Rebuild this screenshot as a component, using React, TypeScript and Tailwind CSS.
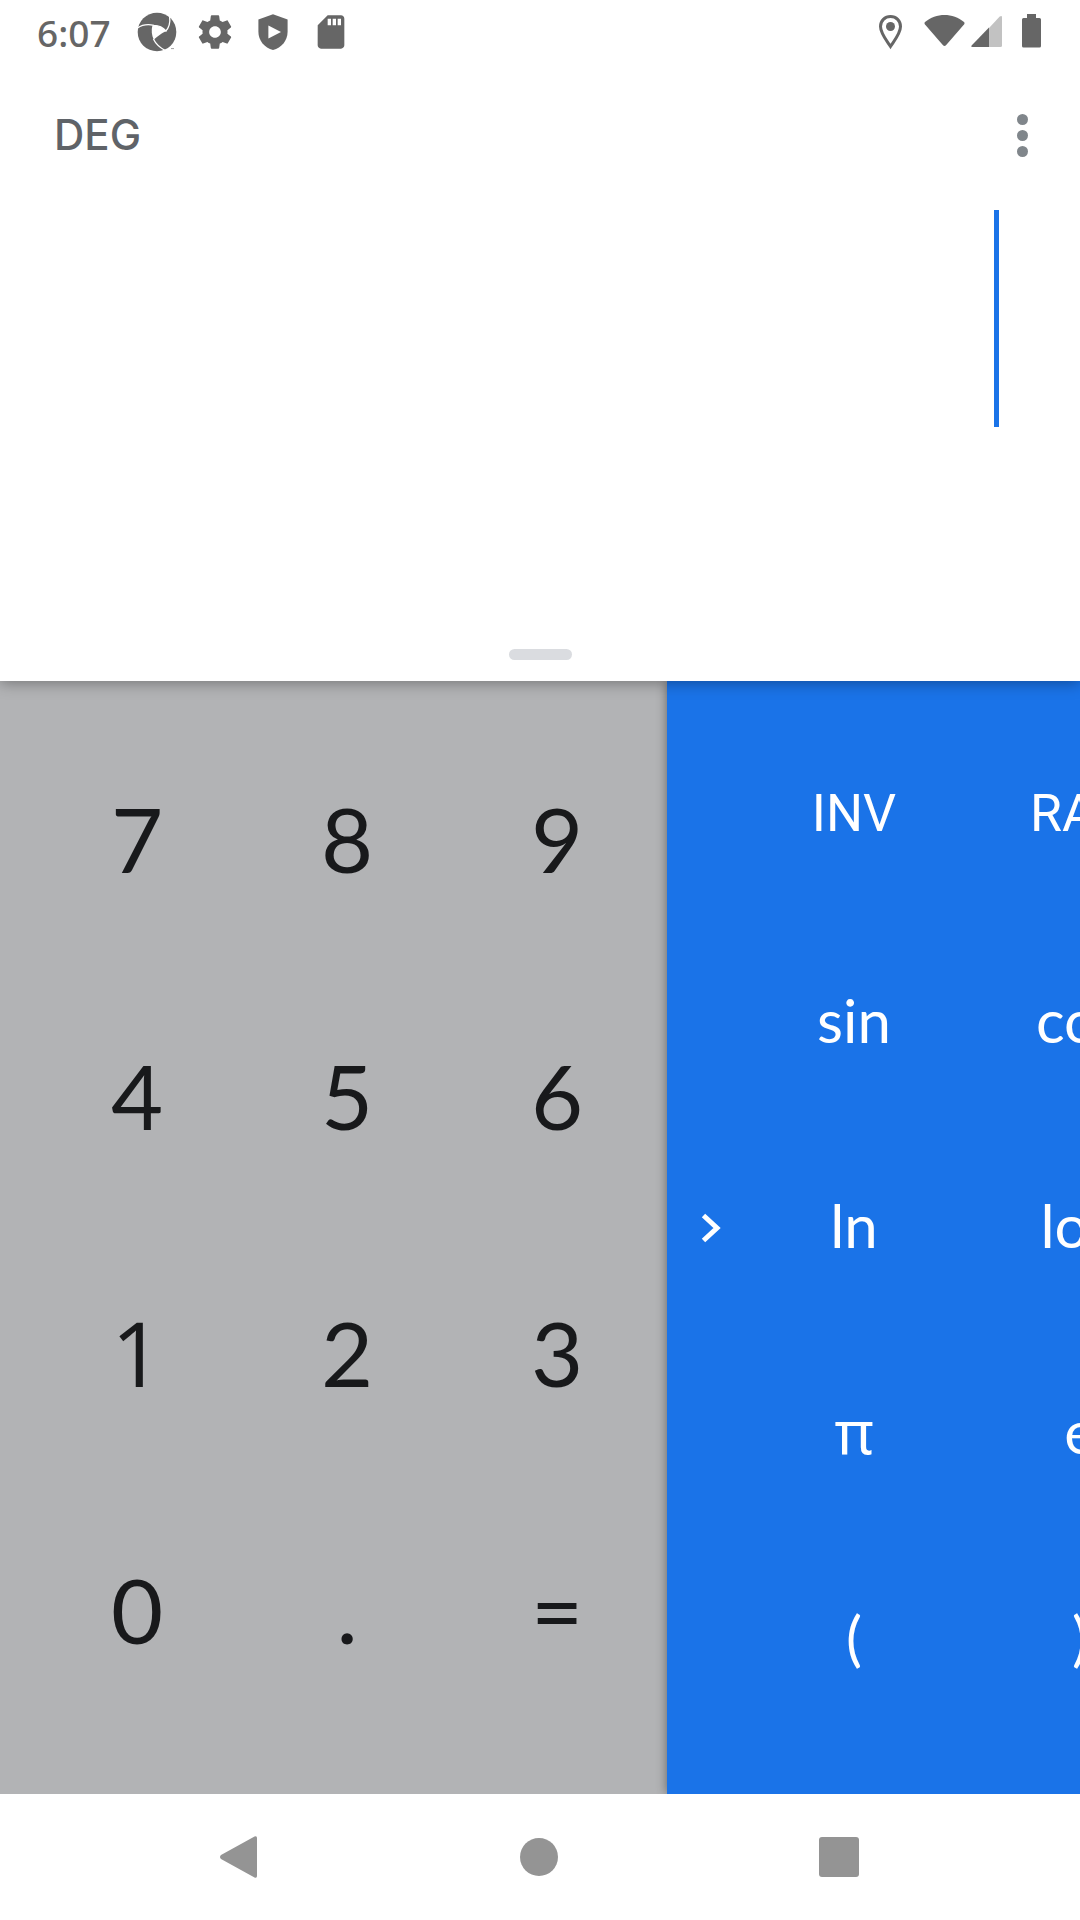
const lato = "font-['Lato',sans-serif]";
const openSans = "font-['Open_Sans',sans-serif]";

const digitKeys = ["7", "8", "9", "4", "5", "6", "1", "2", "3", "0", ".", "="];

const advancedKeys: { label: string; style: string }[] = [
  { label: "INV", style: "font-['Roboto',sans-serif] text-[52px]" },
  { label: "RAD", style: "font-['Roboto',sans-serif] text-[52px]" },
  { label: "sin", style: "font-['Lato',sans-serif] text-[60px]" },
  { label: "cos", style: "font-['Lato',sans-serif] text-[60px]" },
  { label: "ln", style: "font-['Lato',sans-serif] text-[60px]" },
  { label: "log", style: "font-['Lato',sans-serif] text-[60px]" },
  { label: "π", style: "font-['Noto_Sans',sans-serif] text-[60px]" },
  { label: "e", style: "font-['Lato',sans-serif] text-[60px]" },
  { label: "(", style: "font-['Lato',sans-serif] text-[60px]" },
  { label: ")", style: "font-['Lato',sans-serif] text-[60px]" },
];

function ApertureIcon() {
  return (
    <svg viewBox="0 0 40 40" className="size-10" aria-hidden="true">
      <circle cx="20" cy="20" r="19.3" fill="#666" />
      <path d="M15.4 13.6C20 13.2 25.5 15 29.2 19C26 20.5 20 24.5 16.8 27.8C14.6 23.5 14.2 18 15.4 13.6Z" fill="#fff" />
      <g fill="none" stroke="#fff" strokeWidth="1.3">
        <path d="M0.5 16C5 12.9 11 12 17 13.4C21 13.4 26 15.4 29.4 19.4" />
        <path d="M32.6 4.6C33.4 10 32 15.5 28.6 19.4" />
        <path d="M16.4 27C18.6 31.5 22.5 35.4 28 38.4" />
      </g>
      <path d="M27.5 38.5C30.5 37.6 33.5 36 35.4 34L40 34V40H25Z" fill="#fff" />
      <path d="M34 36.6h3" stroke="#888" strokeWidth="0.8" />
    </svg>
  );
}

function GearIcon() {
  return (
    <svg viewBox="0 0 24 24" className="size-10" fill="#666" aria-hidden="true">
      <path d="M19.43 12.98c.04-.32.07-.64.07-.98s-.03-.66-.07-.98l2.11-1.65c.19-.15.24-.42.12-.64l-2-3.46c-.12-.22-.39-.3-.61-.22l-2.49 1c-.52-.4-1.08-.73-1.69-.98l-.38-2.65C14.46 2.18 14.25 2 14 2h-4c-.25 0-.46.18-.49.42l-.38 2.65c-.61.25-1.17.59-1.69.98l-2.49-1c-.23-.09-.49 0-.61.22l-2 3.46c-.13.22-.07.49.12.64l2.11 1.65c-.04.32-.07.65-.07.98s.03.66.07.98l-2.11 1.65c-.19.15-.24.42-.12.64l2 3.46c.12.22.39.3.61.22l2.49-1c.52.4 1.08.73 1.69.98l.38 2.65c.03.24.24.42.49.42h4c.25 0 .46-.18.49-.42l.38-2.65c.61-.25 1.17-.59 1.69-.98l2.49 1c.23.09.49 0 .61-.22l2-3.46c.12-.22.07-.49-.12-.64l-2.11-1.65zM12 15.5c-1.93 0-3.5-1.57-3.5-3.5s1.57-3.5 3.5-3.5 3.5 1.57 3.5 3.5-1.57 3.5-3.5 3.5z" />
    </svg>
  );
}

function ShieldPlayIcon() {
  return (
    <svg viewBox="0 0 40 40" className="size-10" aria-hidden="true">
      <path d="M20 2.2L34.6 7.6V19.5C34.6 29 28.5 35.5 20 38C11.5 35.5 5.4 29 5.4 19.5V7.6Z" fill="#666" />
      <path d="M15.4 13.4V26.6L28 20Z" fill="#fff" />
    </svg>
  );
}

function SdCardIcon() {
  return (
    <svg viewBox="0 0 24 24" className="size-10" fill="#666" aria-hidden="true">
      <path d="M18 2h-8L4.02 8 4 20c0 1.1.9 2 2 2h12c1.1 0 2-.9 2-2V4c0-1.1-.9-2-2-2zm-6 6h-2V4h2v4zm3 0h-2V4h2v4zm3 0h-2V4h2v4z" />
    </svg>
  );
}

function StatusBar() {
  return (
    <div className="flex h-16 items-center pr-[38px] pl-[37px]">
      <span className="font-['Noto_Sans',sans-serif] text-[37px] leading-none font-medium text-[#666]">6:07</span>
      <div className="ml-[26px] flex gap-[18px]">
        <ApertureIcon />
        <GearIcon />
        <ShieldPlayIcon />
        <SdCardIcon />
      </div>
      <div className="ml-auto flex items-center">
        <svg viewBox="0 0 24 36" className="mr-[21px] h-9 w-6" aria-hidden="true">
          <path d="M11.500 2.500C5.800 2.500 1.500 6.800 1.500 12.500C1.500 19.500 8 27 11.500 32.500C15 27 21.500 19.500 21.500 12.500C21.500 6.800 17.200 2.500 11.500 2.500Z" fill="none" stroke="#666" strokeWidth="3" />
          <circle cx="11.5" cy="12.5" r="4.5" fill="#666" />
        </svg>
        <svg viewBox="0 0 41 36" className="mr-[6px] h-9 w-[41px]" aria-hidden="true">
          <path d="M1 8C12 -1.500 29 -1.500 40 8Q41 9 40 10.500L22 31.300Q20.500 32.800 19 31.300L1 10.500Q0 9 1 8Z" fill="#666" />
        </svg>
        <svg viewBox="0 0 32 36" className="mr-[19px] h-9 w-8" aria-hidden="true">
          <path d="M18 14L28.500 2.800Q31 1 31 3.500V31.500Q31 33 29.500 33H18Z" fill="#c2c2c2" />
          <path d="M18 13.500V33H1.500Q-0.500 33 0.600 31.400Z" fill="#666" />
        </svg>
        <svg viewBox="0 0 20 36" className="h-9 w-5" aria-hidden="true">
          <path d="M5 0H14V4H17.500Q19 4 19 5.500V32Q19 33.500 17.500 33.500H1.500Q0 33.500 0 32V5.500Q0 4 1.500 4H5Z" fill="#666" />
        </svg>
      </div>
    </div>
  );
}

function Display() {
  return (
    <header className="relative z-10 bg-white shadow-[0_2px_14px_rgba(0,0,0,0.35)]">
      <StatusBar />
      <div className="flex h-[146px] items-center justify-between pr-[38px] pb-1 pl-[54px]">
        <span className="font-['Inter',sans-serif] text-[42px] leading-none font-medium text-[#5f6368]">DEG</span>
        <button type="button" aria-label="More options" className="flex w-10 flex-col items-center gap-[5px]">
          <span className="size-[11px] rounded-full bg-[#80868b]" />
          <span className="size-[11px] rounded-full bg-[#80868b]" />
          <span className="size-[11px] rounded-full bg-[#80868b]" />
        </button>
      </div>
      <div className="flex pr-[81px]">
        <input
          type="text"
          aria-label="Formula"
          readOnly
          className="min-w-0 flex-1 text-right font-['Lato',sans-serif] text-[90px] outline-none"
        />
        <span className="h-[217px] w-[5px] bg-[#1a73e8]" />
      </div>
      <div className="flex justify-center pt-[222px] pb-[21px]">
        <button type="button" aria-label="Show history" className="h-[11px] w-[63px] rounded-full bg-[#dadce0]" />
      </div>
    </header>
  );
}

function DigitPad() {
  return (
    <div className="grid min-w-0 grid-cols-3 grid-rows-4 bg-[#b2b3b5] pt-8 pr-[5px] pb-[52px] pl-8">
      {digitKeys.map((key) => (
        <button
          key={key}
          type="button"
          className={`pb-2 text-[90px] leading-none text-[#18191b] ${key === "1" ? openSans : lato}`}
        >
          {key}
        </button>
      ))}
    </div>
  );
}

function AdvancedPad() {
  return (
    <div className="flex min-w-0 flex-1 overflow-hidden bg-[#1a73e8] pt-8 pb-[52px]">
      <button type="button" aria-label="Expand advanced functions" className="flex w-[74px] shrink-0 items-center justify-end pr-5">
        <svg viewBox="0 0 20 30" className="h-[30px] w-5" aria-hidden="true">
          <path d="M2.500 2.500L16 15L2.500 27.500" fill="none" stroke="#fff" strokeWidth="5" />
        </svg>
      </button>
      <div className="grid shrink-0 grid-cols-[226px_226px] grid-rows-5">
        {advancedKeys.map(({ label, style }) => (
          <button key={label} type="button" className={`pb-1 leading-none text-white ${style}`}>
            {label}
          </button>
        ))}
      </div>
    </div>
  );
}

function NavigationBar() {
  return (
    <nav className="flex h-[126px] shrink-0 items-center justify-center gap-[261px] pr-[3px]">
      <button type="button" aria-label="Back">
        <svg viewBox="0 0 40 44" className="h-11 w-10" aria-hidden="true">
          <path d="M35.500 1.500Q38 0.500 38 3V41Q38 43.500 35.500 42.500L2 24Q0 22 2 20Z" fill="#949494" />
        </svg>
      </button>
      <button type="button" aria-label="Home" className="size-[38px] rounded-full bg-[#949494]" />
      <button type="button" aria-label="Overview" className="size-10 rounded-[3px] bg-[#949494]" />
    </nav>
  );
}

export default function App() {
  return (
    <div className="flex min-h-screen flex-col bg-white">
      <Display />
      <main className="grid flex-1 grid-cols-[667fr_413fr] overflow-hidden">
        <DigitPad />
        <div className="relative flex min-w-0 shadow-[0_0_10px_rgba(0,0,0,0.45)]">
          <AdvancedPad />
        </div>
      </main>
      <NavigationBar />
    </div>
  );
}
